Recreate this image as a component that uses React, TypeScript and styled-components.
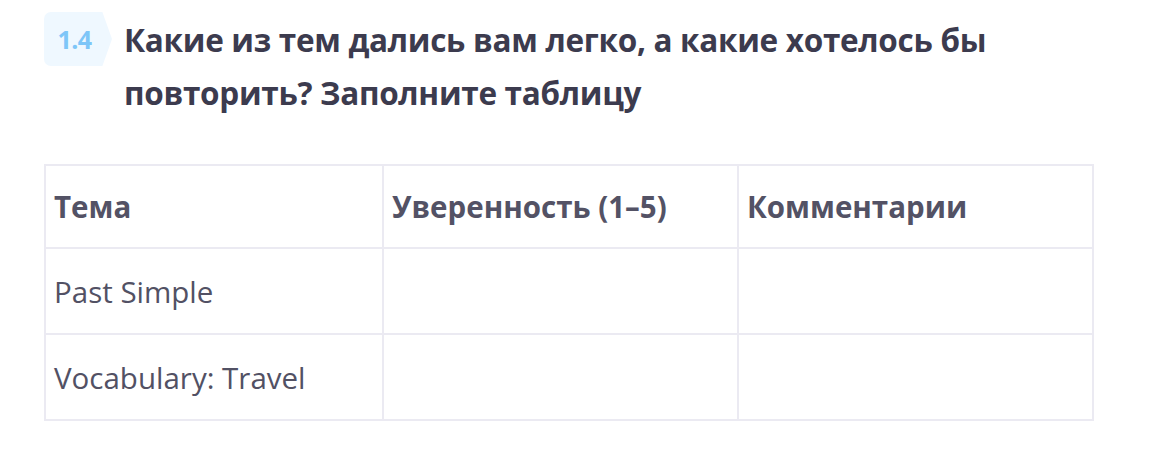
import * as React from 'react';
import styled, { createGlobalStyle } from 'styled-components';

const GlobalStyle = createGlobalStyle`
    html, body {
        margin: 0;
        padding: 0;
        background: #fff;
    }
    body {
        font-family: "Open Sans", "Noto Sans", sans-serif;
    }
`;

const Page = styled.div`
    padding: 12px 0 0 44px;
    width: 1048px;
`;

const TaskHeader = styled.div`
    display: flex;
    align-items: flex-start;
    gap: 24px;
`;

const Badge = styled.div`
    position: relative;
    flex: none;
    width: 56px;
    height: 54px;
    background: #eff8ff;
    border-radius: 7px 0 0 7px;
    display: flex;
    align-items: center;
    justify-content: center;
    padding-left: 5px;
    box-sizing: border-box;
    font-size: 25px;
    font-weight: 700;
    color: #7ec6f8;
    letter-spacing: -0.5px;
    &::after {
        content: "";
        position: absolute;
        left: 100%;
        top: 0;
        width: 12px;
        height: 54px;
        background: #eff8ff;
        clip-path: polygon(0 0, 20% 0, 100% 50%, 20% 100%, 0 100%);
    }
`;

const Title = styled.h2`
    margin: 0;
    padding-top: 1px;
    font-size: 31.5px;
    line-height: 53px;
    font-weight: 700;
    color: #3c3b4e;
    letter-spacing: -0.3px;
`;

const Table = styled.table`
    margin-top: 45px;
    width: 1048px;
    border-collapse: collapse;
    table-layout: fixed;
`;

const Cell = styled.td<{ head?: boolean }>`
    border: 2px solid #ebeaf2;
    height: ${props => props.head ? 81 : 84}px;
    padding: 0 8px;
    vertical-align: middle;
    font-size: 29.5px;
    font-weight: ${props => props.head ? 700 : 400};
    color: ${props => props.head ? '#535265' : '#525164'};
    white-space: nowrap;
`;

const columns = ['Тема', 'Уверенность (1–5)', 'Комментарии'];
const rows = ['Past Simple', 'Vocabulary: Travel'];

export default function App() {
    return (
        <Page>
            <GlobalStyle />
            <TaskHeader>
                <Badge>1.4</Badge>
                <Title>
                    Какие из тем дались вам легко, а какие хотелось бы<br />
                    повторить? Заполните таблицу
                </Title>
            </TaskHeader>
            <Table>
                <colgroup>
                    <col style={{ width: 338 }} />
                    <col style={{ width: 355 }} />
                    <col style={{ width: 355 }} />
                </colgroup>
                <tbody>
                    <tr>
                        {columns.map(c => <Cell head key={c}>{c}</Cell>)}
                    </tr>
                    {rows.map(r => (
                        <tr key={r}>
                            <Cell>{r}</Cell>
                            <Cell />
                            <Cell />
                        </tr>
                    ))}
                </tbody>
            </Table>
        </Page>
    );
}
